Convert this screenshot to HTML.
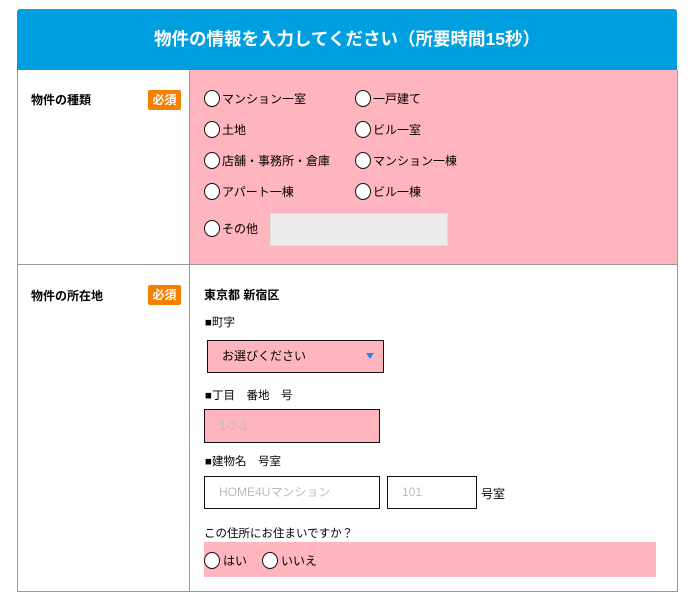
<!DOCTYPE html>
<html><head><meta charset="utf-8"><style>
*{margin:0;padding:0;box-sizing:border-box}
body{width:690px;height:601px;background:#fff;font-family:"Liberation Sans","Noto Sans CJK JP",sans-serif;color:#000;position:relative;overflow:hidden}
.a{position:absolute}
.hdr{left:17px;top:9px;width:660px;height:61px;background:#009fe0;border-radius:3px 3px 0 0;color:#fff;font-weight:bold;font-size:17.5px;text-align:center;line-height:61px}
.box{left:17px;top:70px;width:661px;height:522px;border:1px solid #999;border-top:none}
.div{left:189px;top:70px;width:1px;height:522px;background:#999}
.hline{left:17px;top:264px;width:661px;height:1px;background:#999}
.pink{background:#ffb5be}
.lbl{font-size:12px;font-weight:bold}
.badge{width:33px;height:20px;background:#f57f00;color:#fff;font-size:12px;font-weight:bold;text-align:center;line-height:20px;border-radius:2px}
.r{width:16px;height:17px;border:1.5px solid #111;border-radius:50%;background:#fff}
.t{font-size:12px;white-space:nowrap}
.in{border:1px solid #111;font-size:12px;color:#bbb;padding-left:14px}
</style></head><body>
<div class="a hdr">物件の情報を入力してください（所要時間15秒）</div>
<div class="a pink" style="left:190px;top:70px;width:487px;height:194px"></div>
<div class="a box"></div>
<div class="a div"></div>
<div class="a hline"></div>

<div class="a lbl" style="left:31px;top:91px">物件の種類</div>
<div class="a badge" style="left:148px;top:90px">必須</div>
<div class="a lbl" style="left:31px;top:287px">物件の所在地</div>
<div class="a badge" style="left:148px;top:285px">必須</div>

<div class="a r" style="left:204px;top:90px"></div><div class="a t" style="left:222px;top:90px">マンション一室</div>
<div class="a r" style="left:355px;top:90px"></div><div class="a t" style="left:373px;top:90px">一戸建て</div>
<div class="a r" style="left:204px;top:121px"></div><div class="a t" style="left:222px;top:121px">土地</div>
<div class="a r" style="left:355px;top:121px"></div><div class="a t" style="left:373px;top:121px">ビル一室</div>
<div class="a r" style="left:204px;top:152px"></div><div class="a t" style="left:222px;top:152px">店舗・事務所・倉庫</div>
<div class="a r" style="left:355px;top:152px"></div><div class="a t" style="left:373px;top:152px">マンション一棟</div>
<div class="a r" style="left:204px;top:183px"></div><div class="a t" style="left:222px;top:183px">アパート一棟</div>
<div class="a r" style="left:355px;top:183px"></div><div class="a t" style="left:373px;top:183px">ビル一棟</div>
<div class="a r" style="left:204px;top:220px"></div><div class="a t" style="left:222px;top:220px">その他</div>
<div class="a" style="left:270px;top:213px;width:178px;height:33px;background:#ececec;border:1px solid #ddd"></div>

<div class="a lbl" style="left:204px;top:286px">東京都 新宿区</div>
<div class="a t" style="left:205px;top:314px;font-size:11.5px">■町字</div>
<div class="a in pink" style="left:207px;top:340px;width:177px;height:33px;color:#000;line-height:31px;padding-left:14px">お選びください</div>
<div class="a" style="left:366px;top:353px;width:0;height:0;border-left:4px solid transparent;border-right:4px solid transparent;border-top:6px solid #1e88e5"></div>
<div class="a t" style="left:205px;top:387px;font-size:11.5px">■丁目　番地　号</div>
<div class="a in pink" style="left:204px;top:409px;width:176px;height:34px;line-height:32px">1-2-3</div>
<div class="a t" style="left:205px;top:453px;font-size:11.5px">■建物名　号室</div>
<div class="a in" style="left:204px;top:476px;width:176px;height:33px;line-height:31px;background:#fff">HOME4Uマンション</div>
<div class="a in" style="left:387px;top:476px;width:90px;height:33px;line-height:31px;background:#fff">101</div>
<div class="a t" style="left:481px;top:485px;font-size:12px">号室</div>
<div class="a t" style="left:204px;top:525px;font-size:11.5px">この住所にお住まいですか？</div>
<div class="a pink" style="left:204px;top:542px;width:452px;height:35px"></div>
<div class="a r" style="left:204px;top:552px"></div><div class="a t" style="left:223px;top:552px">はい</div>
<div class="a r" style="left:262px;top:552px"></div><div class="a t" style="left:281px;top:552px">いいえ</div>
</body></html>
